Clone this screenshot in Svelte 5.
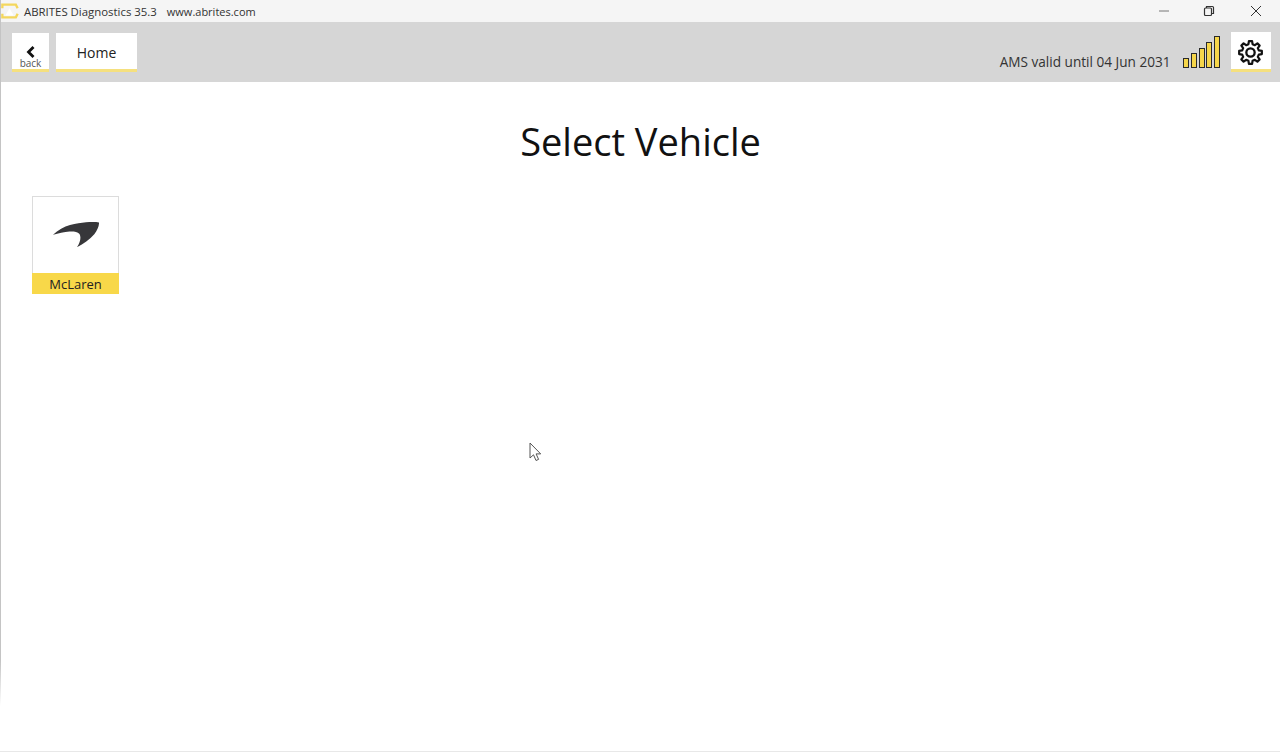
<script>
  /**
   * Vehicle selection screen: title bar, toolbar and a grid of make tiles.
   */
  let makes = $state(['McLaren']);
  let barHeights = [10, 15, 20, 26, 32];

  // Settings cog outline, eight square-ish teeth round the hub
  function gearPath(teeth = 8, outer = 11, root = 8.2) {
    const points = [];
    for (let i = 0; i < teeth; i++) {
      const a = (i * 360) / teeth;
      const corners = [[a - 14, root], [a - 8, outer], [a + 8, outer], [a + 14, root]];
      for (const [deg, r] of corners) {
        const rad = (deg * Math.PI) / 180;
        points.push(`${(12 + r * Math.cos(rad)).toFixed(2)} ${(12 + r * Math.sin(rad)).toFixed(2)}`);
      }
    }
    return 'M' + points.join('L') + 'Z';
  }
</script>

<div class="window">
  <header class="titlebar">
    <svg class="app-logo" viewBox="0 0 20 20" aria-hidden="true">
      <path d="M1.500 7V3h15l2 4" fill="none" stroke="#f4d75e" stroke-width="2.600" />
      <path d="M1.500 13v4h15l2-4" fill="none" stroke="#f4d75e" stroke-width="2.600" />
      <path d="M5 15l4.500-8 4.500 8z" fill="#fff" />
    </svg>
    <span class="app-name">ABRITES Diagnostics 35.3</span>
    <span class="app-url">www.abrites.com</span>
    <div class="window-controls">
      <button class="win-btn" aria-label="Minimize">
        <svg viewBox="0 0 12 12" width="12" height="12"><path d="M1 6h10" stroke="#777" fill="none" /></svg>
      </button>
      <button class="win-btn" aria-label="Restore">
        <svg viewBox="0 0 12 12" width="12" height="12">
          <rect x="1.500" y="3" width="7" height="7.500" rx="1" fill="none" stroke="#333" stroke-width="1.200" />
          <path d="M3.500 3V1.500h6a1 1 0 0 1 1 1v6H8.500" fill="none" stroke="#333" stroke-width="1.200" />
        </svg>
      </button>
      <button class="win-btn close" aria-label="Close">
        <svg viewBox="0 0 12 12" width="12" height="12"><path d="M1 1l10 10M11 1L1 11" stroke="#333" fill="none" /></svg>
      </button>
    </div>
  </header>

  <nav class="toolbar">
    <button class="tool-btn back">
      <svg viewBox="0 0 10 12" width="10" height="12" aria-hidden="true">
        <path d="M7.500 1L2.500 6l5 5" fill="none" stroke="#111" stroke-width="2.800" />
      </svg>
      <span>back</span>
    </button>
    <button class="tool-btn home">Home</button>

    <div class="status">
      <span class="ams">AMS valid until 04 Jun 2031</span>
      <div class="signal">
        {#each barHeights as h}
          <i style="height: {h}px"></i>
        {/each}
      </div>
      <button class="tool-btn settings" aria-label="Settings">
        <svg viewBox="0 0 24 24" width="25" height="25" aria-hidden="true">
          <circle cx="12" cy="12" r="4" fill="none" stroke="#111" stroke-width="2.200" />
          <path d={gearPath()} fill="none" stroke="#111" stroke-width="2.100" stroke-linejoin="round" />
        </svg>
      </button>
    </div>
  </nav>

  <main class="content">
    <h1>Select Vehicle</h1>
    <div class="tiles">
      {#each makes as make}
        <button class="tile">
          <span class="tile-logo">
            <svg viewBox="0 0 46 25" width="46" height="25" aria-hidden="true">
              <path
                d="M0 12.800C5 8 11 4.800 17 3 23 1.400 28 .8 33 .3 38 -.1 43 -.1 46 .5 46.200 3.500 44.500 8 41.500 12 36.500 18 30 21.800 24 25.200 27 20.500 28.500 15.500 26.500 12 24.500 9.500 20 9.300 16.500 9.500 11 9.900 5.500 11.200 0 12.800z"
                fill="#37373a"
              />
            </svg>
          </span>
          <span class="tile-label">{make}</span>
        </button>
      {/each}
    </div>
  </main>

  <svg class="cursor" viewBox="0 0 13 20" width="13" height="20" aria-hidden="true">
    <path d="M1 1v15l3.500-3.200L7 18.500l2.600-1.100-2.500-5.500h4.600z" fill="#fff" stroke="#555" stroke-width="1" />
  </svg>
</div>

<style>
  :global(body) {
    margin: 0;
    background: #fff;
  }

  .window {
    position: relative;
    height: 752px;
    overflow: hidden;
    font-family: "Open Sans", "Noto Sans", sans-serif;
    color: #111;
    background: #fff;
    box-sizing: border-box;
    padding-left: 1px;
    border-bottom: 1px solid #e8e8e8;
    background-image: linear-gradient(#c4c4c4 88%, #fff 94%);
    background-size: 1px 100%;
    background-repeat: no-repeat;
  }

  button {
    font-family: inherit;
    border: none;
    padding: 0;
    color: inherit;
  }

  .titlebar {
    display: flex;
    align-items: center;
    height: 22px;
    background: #f5f5f5;
    color: #333;
  }

  .app-logo {
    width: 18px;
    height: 20px;
    margin-right: 5px;
    flex-shrink: 0;
  }

  .app-name {
    font-size: 11.4px;
  }

  .app-url {
    margin-left: 10px;
    font-size: 11px;
  }

  .window-controls {
    display: flex;
    margin-left: auto;
    margin-right: 1px;
  }

  .win-btn {
    display: flex;
    align-items: center;
    justify-content: center;
    width: 45px;
    height: 22px;
    background: transparent;
  }

  .win-btn.close {
    width: 46px;
    margin-left: 2px;
  }

  .toolbar {
    display: flex;
    align-items: flex-start;
    height: 60px;
    padding: 11px 9px 0 11px;
    box-sizing: border-box;
    background: #d6d6d6;
  }

  .tool-btn {
    background: #fff;
    border-bottom: 3px solid #f5e07e;
    box-sizing: border-box;
    height: 39px;
  }

  .back {
    display: flex;
    flex-direction: column;
    align-items: center;
    justify-content: flex-end;
    width: 37px;
    margin-right: 7px;
    font-size: 10px;
    line-height: 11px;
    color: #555;
  }

  .home {
    width: 81px;
    padding-top: 3px;
    font-size: 14px;
    color: #222;
  }

  .status {
    display: flex;
    align-items: flex-end;
    margin-left: auto;
  }

  .ams {
    font-size: 13.6px;
    line-height: 18px;
    color: #333;
    margin-bottom: 1px;
  }

  .signal {
    display: flex;
    align-items: flex-end;
    gap: 1.75px;
    height: 32px;
    margin: 0 11px 4px 12.500px;
  }

  .signal i {
    display: block;
    width: 6px;
    box-sizing: border-box;
    background: #f6d64a;
    border: 1.4px solid #2a2a2a;
  }

  .settings {
    display: flex;
    align-items: center;
    justify-content: center;
    width: 40px;
    height: 40px;
    margin-top: -1px;
    padding: 3px 1px 0 0;
  }

  .content {
    padding: 0 31px;
  }

  h1 {
    margin: 36px 0 32px;
    font-size: 38px;
    line-height: 46px;
    font-weight: 400;
    text-align: center;
    color: #111;
  }

  .tiles {
    display: flex;
    flex-wrap: wrap;
    gap: 8px;
  }

  .tile {
    display: flex;
    flex-direction: column;
    width: 87px;
    height: 98px;
    background: #fff;
  }

  .tile-logo {
    display: flex;
    align-items: center;
    justify-content: center;
    flex: 1;
    align-self: stretch;
    padding-bottom: 2px;
    border: 1px solid #dcdcdc;
    border-bottom: none;
  }

  .tile-label {
    align-self: stretch;
    height: 21px;
    padding-top: 1px;
    box-sizing: border-box;
    line-height: 20px;
    font-size: 13px;
    text-align: center;
    color: #222;
    background: #f8d849;
  }

  .cursor {
    position: absolute;
    left: 529px;
    top: 442px;
  }
</style>
